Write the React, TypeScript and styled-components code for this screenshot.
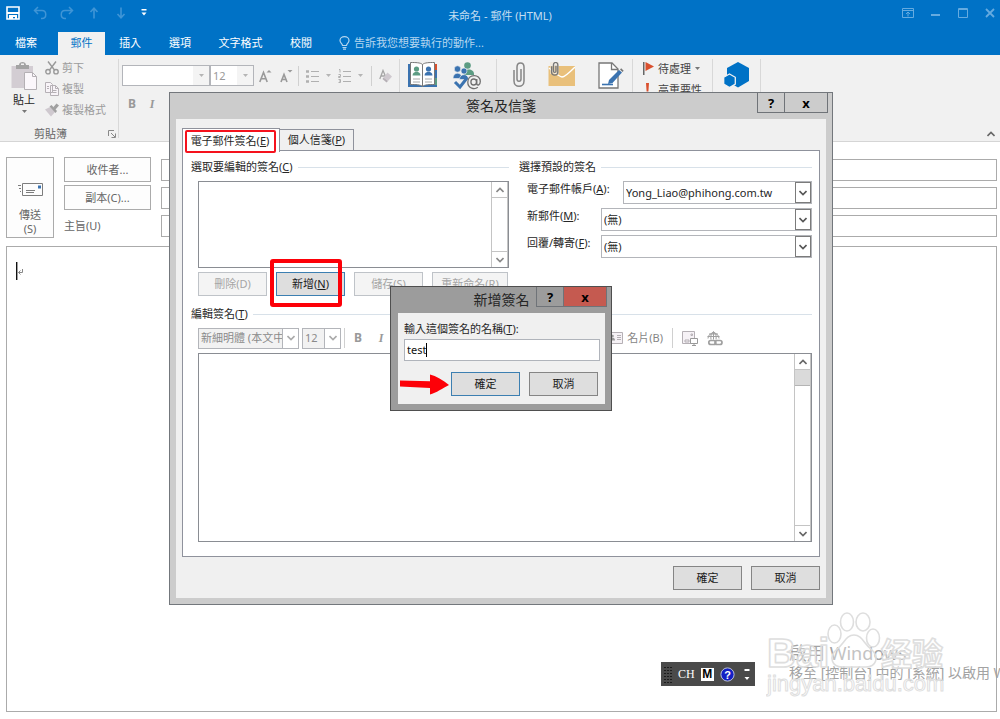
import React from "react";
import styled, { createGlobalStyle, css } from "styled-components";

const GlobalStyle = createGlobalStyle`
  * { box-sizing: border-box; }
  body {
    margin: 0;
    background: #fff;
    font: 11px/16px "Noto Sans", "Noto Sans CJK TC", sans-serif;
    color: #262626;
  }
  button, input, select { font: inherit; color: inherit; }
  button { padding: 0; margin: 0; border: 0; background: none; white-space: nowrap; }
  svg { display: block; flex: none; }
`;

const Page = styled.main`
  position: relative;
  min-height: 100vh;
  display: flex;
  flex-direction: column;
  overflow: hidden;
`;

/* ---------- title bar and ribbon tabs ---------- */

const Header = styled.header`
  background: #0072c6;
  color: #fff;
`;

const TitleBar = styled.div`
  height: 32px;
  display: grid;
  grid-template-columns: 1fr auto 1fr;
  color: #c5def1;
`;

const QuickAccess = styled.div`
  display: flex;
  align-items: center;
  gap: 13px;
  height: 26px;
  padding-left: 6px;
`;

const WindowTitle = styled.h1`
  margin: 0;
  padding-top: 8px;
  font-size: 11px;
  font-weight: 400;
`;

const WindowControls = styled(QuickAccess)`
  justify-content: flex-end;
  padding: 0 5px 0 0;
`;

const RibbonTabs = styled.nav`
  height: 23px;
  display: flex;
`;

const RibbonTab = styled.button<{ $active?: boolean; $width: number }>`
  width: ${(p) => p.$width}px;
  height: 23px;
  padding-bottom: 2px;
  color: ${(p) => (p.$active ? "#0072c6" : "#fff")};
  background: ${(p) => (p.$active ? "#f1f1f1" : "transparent")};
  &:first-child { margin-right: 6px; }
`;

const TellMe = styled.button`
  display: flex;
  align-items: center;
  gap: 4px;
  margin-left: 13px;
  height: 22px;
  color: #b5d6ef;
`;

/* ---------- ribbon ---------- */

const Ribbon = styled.section`
  height: 87px;
  padding: 4px 0 3px;
  display: flex;
  background: #f1f1f1;
  border-bottom: 1px solid #d5d5d5;
`;

const RibbonGroup = styled.div<{ $width: number; $gap?: number }>`
  width: ${(p) => p.$width}px;
  height: 79px;
  display: flex;
  align-items: flex-start;
  justify-content: center;
  gap: ${(p) => p.$gap ?? 0}px;
  padding-top: 3px;
  border-right: 1px solid #d8d8d8;
`;

const NamesGroup = styled(RibbonGroup)`
  justify-content: flex-start;
  padding-left: 8px;
`;

const ClipboardGroup = styled(RibbonGroup)`
  display: grid;
  grid-template-columns: 28px 1fr;
  grid-template-rows: 62px 16px;
  justify-content: start;
  gap: 0 7px;
  padding: 1px 2px 0 10px;
`;

const PasteButton = styled.button`
  align-self: start;
  display: flex;
  flex-direction: column;
  align-items: center;
  gap: 2px;
`;

const ClipboardActions = styled.div`
  display: flex;
  flex-direction: column;
  gap: 5px;
  color: #9c9c9c;
`;

const ClipboardAction = styled.button`
  display: flex;
  align-items: center;
  gap: 3px;
  height: 16px;
`;

const GroupFooter = styled.div`
  grid-column: 1 / -1;
  display: flex;
  justify-content: space-between;
  align-items: center;
  padding-left: 24px;
  margin-top: 4px;
  color: #666;
`;

const FontGroup = styled(RibbonGroup)`
  flex-direction: column;
  align-items: stretch;
  justify-content: flex-start;
  gap: 10px;
  padding: 6px 0 0 3px;
  color: #999;
`;

const ToolRow = styled.div`
  display: flex;
  align-items: center;
`;

const ToolIcon = styled.button<{ $ml?: number }>`
  flex: none;
  margin-left: ${(p) => p.$ml ?? 0}px;
`;

const Rule = styled.span<{ $ml: number }>`
  width: 1px;
  height: 20px;
  margin-left: ${(p) => p.$ml}px;
  background: #d0d0d0;
`;

const Letter = styled.button<{ $italic?: boolean }>`
  width: 20px;
  font: ${(p) => (p.$italic ? "italic" : "normal")} bold 12px/16px
    ${(p) => (p.$italic ? '"Liberation Serif", serif' : '"Noto Sans", sans-serif')};
  color: #999;
`;

const TagList = styled.div`
  display: flex;
  flex-direction: column;
  gap: 4px;
  margin-top: -2px;
`;

const TagButton = styled.button`
  display: flex;
  align-items: center;
  gap: 4px;
  height: 17px;
  color: #444;
`;

const RibbonEnd = styled.div`
  flex: 1;
  display: flex;
  align-items: flex-end;
  justify-content: flex-end;
  padding: 0 5px 1px 0;
`;

/* ---------- message form ---------- */

const Compose = styled.form`
  flex: 1;
  display: flex;
  flex-direction: column;
  gap: 8px;
  padding: 15px 3px 7px 6px;
  color: #666;
`;

const Envelope = styled.div`
  display: grid;
  grid-template-columns: 48px 87px 1fr;
  grid-template-rows: 25px 25px 25px;
  gap: 3px 10px;
  align-items: center;
`;

const SendButton = styled.button`
  grid-row: 1 / 4;
  height: 100%;
  display: flex;
  flex-direction: column;
  align-items: center;
  justify-content: flex-start;
  padding-top: 25px;
  line-height: 14px;
  border: 1px solid #ababab;
  background: #fdfdfd;
  & > svg { margin-bottom: 11px; }
`;

const RecipientButton = styled.button`
  height: 25px;
  border: 1px solid #ababab;
  background: #fdfdfd;
`;

const HeaderInput = styled.input`
  width: 100%;
  height: 22px;
  border: 1px solid #ababab;
  background: #fff;
`;

const Body = styled.div`
  flex: 1;
  padding: 15px 9px;
  border: 1px solid #ababab;
  outline: 0;
`;

/* ---------- dialogs ---------- */

const DialogLayer = styled.div<{ $top: number }>`
  position: absolute;
  inset: ${(p) => p.$top}px 0 auto;
  display: flex;
  justify-content: center;
`;

const MainLayer = styled(DialogLayer)`
  padding-left: 2px;
`;

const Dialog = styled.section<{ $tone: "light" | "dark" }>`
  position: relative;
  ${(p) =>
    p.$tone === "light"
      ? css`
          width: min(664px, 96vw);
          padding: 0 6px 6px;
          border: 1px solid #73777c;
          background: #ccc;
        `
      : css`
          width: 222px;
          padding: 0 6px 6px 7px;
          border: 1px solid #4f4f4f;
          background: #9c9c9c;
        `}
`;

const DialogBar = styled.div`
  height: 26px;
  display: grid;
  grid-template-columns: 1fr auto 1fr;
`;

const DialogTitle = styled.h2`
  grid-column: 2;
  margin: 0;
  font-size: 14px;
  line-height: 25px;
  font-weight: 400;
`;

const DialogControls = styled.div`
  display: flex;
  justify-content: flex-end;
  margin-right: -2px;
`;

const DialogControl = styled.button<{ $wide?: boolean; $danger?: boolean }>`
  flex: none;
  width: ${(p) => (p.$wide ? 44 : 28)}px;
  height: 20px;
  margin-left: -1px;
  border: 1px solid #6f7378;
  border-top: 0;
  background: ${(p) => (p.$danger ? "#c55a50" : "transparent")};
  font: bold 13px/16px "Noto Sans", sans-serif;
  color: #000;
`;

const DialogBody = styled.div`
  padding: 9px 6px 8px;
  background: #f0f0f0;
`;

const TabList = styled.div`
  display: flex;
  align-items: flex-end;
  height: 23px;
  margin-bottom: -1px;
`;

const Tab = styled.button<{ $active?: boolean }>`
  position: relative;
  width: ${(p) => (p.$active ? 98 : 74)}px;
  height: ${(p) => (p.$active ? 24 : 22)}px;
  padding-right: ${(p) => (p.$active ? 2 : 0)}px;
  border: 1px solid #8f929c;
  border-left-width: ${(p) => (p.$active ? 1 : 0)}px;
  border-bottom: ${(p) => (p.$active ? "0" : "1px solid #8f929c")};
  background: ${(p) => (p.$active ? "#fff" : "#f0f0f0")};
  margin-bottom: ${(p) => (p.$active ? -1 : 0)}px;
`;

const Mark = styled.span<{ $thick?: boolean }>`
  position: absolute;
  pointer-events: none;
  ${(p) =>
    p.$thick
      ? css`
          inset: -14px 2px -12px -7px;
          border: 4px solid #fd0008;
          border-radius: 3px;
        `
      : css`
          inset: 1px 3px -1px 2px;
          border: 2px solid #f5121d;
          border-radius: 2px;
        `}
`;

const TabPage = styled.div`
  padding: 8px 7px 14px 8px;
  border: 1px solid #8f929c;
  background: #fff;
`;

const Columns = styled.div`
  display: grid;
  grid-template-columns: 318px 1fr;
  gap: 10px;
  margin-bottom: 10px;
`;

const Group = styled.fieldset`
  min-width: 0;
  margin: 0;
  padding: 0;
  border: 0;
`;

const GroupTitle = styled.div`
  display: flex;
  align-items: center;
  gap: 5px;
  height: 16px;
  margin-bottom: 6px;
  &::after {
    content: "";
    flex: 1;
    height: 1px;
    background: #d8e1e9;
  }
`;

const Indented = styled.div`
  padding-left: 7px;
`;

const Framed = styled.div<{ $height: number }>`
  display: flex;
  justify-content: flex-end;
  height: ${(p) => p.$height}px;
  border: 1px solid #8a8d93;
  background: #fff;
`;

const ScrollBar = styled.div`
  width: 17px;
  display: flex;
  flex-direction: column;
  border: solid #c4c4c4;
  border-width: 0 1px;
`;

const ScrollButton = styled.button<{ $end?: boolean }>`
  height: 16px;
  display: grid;
  place-items: center;
  border: 0 solid #c4c4c4;
  border-width: ${(p) => (p.$end ? "1px 0 0" : "0 0 1px")};
  margin-top: ${(p) => (p.$end ? "auto" : "0")};
`;

const ScrollThumb = styled.div`
  height: 16px;
  border: solid #b4b4b4;
  border-width: 0 0 1px;
  background: #dadada;
`;

const ButtonRow = styled.div<{ $end?: boolean; $top: number }>`
  display: flex;
  gap: 9px;
  justify-content: ${(p) => (p.$end ? "flex-end" : "flex-start")};
  margin-top: ${(p) => p.$top}px;
`;

const PushButton = styled.button<{ $wide?: boolean; $focus?: boolean }>`
  position: relative;
  width: ${(p) => (p.$wide ? 76 : 69)}px;
  height: 24px;
  border: 1px solid ${(p) => (p.$focus ? "#3c7fb1" : "#858585")};
  background: #dedede;
  color: #1a1a1a;
  &:disabled {
    border-color: #bfc3c8;
    background: #f4f4f4;
    color: #a5a5a5;
  }
`;

const FieldList = styled.div`
  display: flex;
  flex-direction: column;
  gap: 4px;
  padding-left: 8px;
`;

const FieldRow = styled.div`
  display: flex;
  justify-content: space-between;
  align-items: flex-start;
`;

const SelectBox = styled.span<{ $width: number; $tall?: boolean; $muted?: boolean }>`
  display: grid;
  grid-template-columns: 1fr 16px;
  width: ${(p) => p.$width}px;
  height: ${(p) => (p.$tall ? 23 : 21)}px;
  border: 1px solid #b3b5ba;
  background: ${(p) => (p.$muted ? "#f2f2f2" : "#fff")};
  color: ${(p) => (p.$muted ? "#8a8a8a" : "#262626")};
`;

const NativeSelect = styled.select<{ $pale?: boolean }>`
  grid-area: 1 / 1 / 2 / 3;
  min-width: 0;
  padding: 0 16px 0 2px;
  border: 0;
  appearance: none;
  background: transparent;
  color: ${(p) => (p.$pale ? "#999" : "inherit")};
`;

const SelectArrow = styled.span<{ $look: "strong" | "soft" | "flat" }>`
  grid-area: 1 / 2;
  display: grid;
  place-items: center;
  pointer-events: none;
  background: ${(p) => (p.$look === "flat" ? "#f4f4f4" : "#fff")};
  border: ${(p) => (p.$look === "strong" ? "1px solid #7b7b7b" : "0 solid #b3b5ba")};
  ${(p) => p.$look === "soft" && "border-left-width: 1px;"}
`;

const EditorTools = styled(ToolRow)`
  height: 20px;
  gap: 3px;
  margin-bottom: 5px;
  color: #858585;
`;

const EditorToolsEnd = styled.div`
  display: flex;
  align-items: center;
  gap: 9px;
  margin-left: auto;
  padding-right: 89px;
`;

const CardButton = styled.button`
  display: flex;
  align-items: center;
  gap: 4px;
`;

/* ---------- name prompt ---------- */

const PromptBody = styled.div`
  padding: 8px 5px 8px 6px;
  background: #f0f0f0;
`;

const PromptLabel = styled.label`
  display: block;
`;

const PromptField = styled.label`
  display: flex;
  align-items: center;
  height: 22px;
  margin-top: 2px;
  padding-left: 2px;
  border: 1px solid #b0b4bb;
  background: #fff;
`;

const PromptInput = styled.input`
  field-sizing: content;
  padding: 0;
  border: 0;
  outline: 0;
  background: transparent;
  color: #111;
`;

const Caret = styled.span`
  width: 1px;
  height: 14px;
  background: #000;
`;

const PromptButtons = styled.div`
  display: flex;
  align-items: center;
  gap: 9px;
  margin-top: 11px;
  & > svg { margin: 0 -7px 0 -4px; }
`;

/* ---------- desktop overlays ---------- */

const LanguageBar = styled.aside`
  position: absolute;
  right: 245px;
  top: 662px;
  width: 94px;
  height: 24px;
  display: flex;
  align-items: center;
  padding: 0 3px;
  gap: 6px;
  background: #4a4a4a;
  color: #fff;
  font: 12px/16px "Liberation Serif", serif;
`;

const InputMode = styled.button`
  flex: none;
  width: 13px;
  height: 13px;
  background: #fff;
  color: #000;
  font: bold 12px/13px "Liberation Sans", sans-serif;
`;

const Activation = styled.aside`
  position: absolute;
  left: calc(100% - 211px);
  top: 642px;
  width: 240px;
  font-size: 14px;
  line-height: 18px;
  white-space: nowrap;
  color: #a3a3a3;
`;

const ActivationTitle = styled.div`
  font-size: 18px;
  line-height: 22px;
`;

const Watermark = styled.aside`
  position: absolute;
  right: 54px;
  top: 610px;
  width: 180px;
  pointer-events: none;
`;

/* ---------- drawings ---------- */

const Chevron = ({ up, color = "#666" }: { up?: boolean; color?: string }) => (
  <svg width="8" height="6" viewBox="0 0 8 6" fill="none" stroke={color} strokeWidth="1.6">
    <path d={up ? "M.5 5 4 1.500 7.500 5" : "M.5 1 4 4.500 7.500 1"} />
  </svg>
);

const Triangle = ({ color = "#777" }: { color?: string }) => (
  <svg width="5" height="3" viewBox="0 0 5 3" fill={color}>
    <path d="M0 0h5L2.500 3z" />
  </svg>
);

const SaveIcon = () => (
  <svg width="14" height="14" viewBox="0 0 14 14">
    <path d="M1 1h12v12H1z" fill="none" stroke="#fff" strokeWidth="1.600" />
    <path d="M1 6h12v2H1zM3 9h8v4H9v-2H7v2H3z" fill="#fff" />
  </svg>
);

const TurnIcon = ({ redo }: { redo?: boolean }) => (
  <svg width="14" height="14" viewBox="0 0 14 14" fill="none" stroke="#3f95d6" strokeWidth="1.5">
    <g transform={redo ? "translate(14 0) scale(-1 1)" : undefined}>
      <path d="M5 1 1.500 4.500 5 8M1.500 4.500H9c5 0 5 8 0 8H8" />
    </g>
  </svg>
);

const ArrowIcon = ({ down }: { down?: boolean }) => (
  <svg width="14" height="14" viewBox="0 0 14 14" fill="none" stroke="#3f95d6" strokeWidth="1.6">
    <path d={down ? "M7 1.500v10M3.500 8 7 11.800 10.500 8" : "M7 12.500v-10M3.500 6 7 2.200 10.500 6"} />
  </svg>
);

const MoreIcon = () => (
  <svg width="6" height="8" viewBox="0 0 6 8" fill="#fff">
    <path d="M.5 0h5v1.500h-5zM.5 3.500h5L3 6.500z" />
  </svg>
);

const BulbIcon = () => (
  <svg width="11" height="14" viewBox="0 0 11 14" fill="none" stroke="#b5d6ef" strokeWidth="1.2">
    <path d="M3.500 9.500C3.500 7.500 1 7 1 4.500a4.500 3.900 0 0 1 9 0C10 7 7.500 7.500 7.500 9.500zM3.500 11.500h4M4 13.200h3" />
  </svg>
);

const PasteIcon = () => (
  <svg width="28" height="30" viewBox="0 0 28 30">
    <path d="M1.500 6h21.500v22H1.500z" fill="#d3cdd3" />
    <path d="M6 9V5h3c0-4 7-4 7 0h3v4zM11 5h3V3.500h-3z" fill="#a3a3a3" />
    <path d="M14.500 12.500h8l4 4v13h-12z" fill="#fbf7fb" stroke="#b4b0b4" />
    <path d="M22.500 12.500v4h4" fill="none" stroke="#b4b0b4" />
  </svg>
);

const ScissorsIcon = () => (
  <svg width="14" height="14" viewBox="0 0 14 14" fill="none" stroke="#999" strokeWidth="1.4">
    <path d="M3 .5 9.500 9M11 .5 4.500 9" />
    <circle cx="3" cy="10.700" r="2.200" />
    <circle cx="11" cy="10.700" r="2.200" />
  </svg>
);

const CopyIcon = () => (
  <svg width="14" height="14" viewBox="0 0 14 14" fill="#f8f4f8" stroke="#b5b0b5">
    <path d="M.5.5h5l2 2v8h-7zM5.500 3.500h5l3 3v7h-8z" />
    <path d="M10.500 3.500v3h3M7.500 8.500h4M7.500 10.500h4M2 4.500h2M2 6.500h2" fill="none" />
  </svg>
);

const PainterIcon = () => (
  <svg width="14" height="14" viewBox="0 0 14 14">
    <path d="M0 6.500 5 4l5 5-4 4.500z" fill="#cfc9cf" />
    <path d="m4.500 3.500 2-1.500 5.500 6-1.500 2zM8.500 4l3-3.500L14 2.500l-3.500 4z" fill="#a0a0a0" />
  </svg>
);

const LauncherIcon = () => (
  <svg width="8" height="8" viewBox="0 0 8 8" fill="none" stroke="#888">
    <path d="M.5 6V.5H6M3 3l4 4M7.500 3.500v4h-4" />
  </svg>
);

const SizeIcon = ({ smaller }: { smaller?: boolean }) => (
  <svg width="13" height="14" viewBox="0 0 13 14" fill="none" stroke="#999" strokeWidth="1.600">
    <path d={smaller ? "M1 13 4 5.500 7 13M2 10.500h4" : "M.8 13 4.500 3.500 8.200 13M2 9.800h5"} />
    <path d={smaller ? "M7.500 1h5L10 3.500z" : "M7.500 3.500h5L10 1z"} fill="#999" stroke="none" />
  </svg>
);

const ListIcon = ({ numbered }: { numbered?: boolean }) => (
  <svg width="14" height="14" viewBox="0 0 14 14" fill="none" stroke="#b0b0b0">
    <path d="M5 2.500h8M5 7.500h8M5 12.500h8" />
    <path
      d={numbered ? "M1 0.500h1v3M0.500 5.500h2v2h-2v1h2M0.500 10.500h2v3h-2M1 12h1" : "M0 2.500h3M0 7.500h3M0 12.500h3"}
      strokeWidth={numbered ? 1 : 2.500}
    />
  </svg>
);

const EraserIcon = () => (
  <svg width="14" height="14" viewBox="0 0 14 14">
    <path d="M.8 10 4 1.500l3 7M2 7h4" fill="none" stroke="#a5a5a5" strokeWidth="1.300" />
    <path d="m8.500 3.500 4.500 4-4 4.500-4.500-3.500z" fill="#cfc9cf" />
    <path d="m4.500 8.500 4.500 3.500-1.500 1.500L3.500 10z" fill="#b5afb5" />
  </svg>
);

const AddressBookIcon = () => (
  <svg width="30" height="26" viewBox="0 0 30 26">
    <path d="M0 2h29v23H0z" fill="#3b73b0" />
    <path d="M27 2h2v6h-2z" fill="#d9502e" />
    <path d="M27 16h2v7h-2z" fill="#5c9c83" />
    <path d="M2.500.5c5 0 10 0 12 2 2-2 7-2 12-2v22c-5 0-10 0-12 2-2-2-7-2-12-2z" fill="#fff" stroke="#777" />
    <path d="M14.500 2.500v22" stroke="#777" />
    <circle cx="8.500" cy="7" r="2.600" fill="#5c9c83" />
    <path d="M4.500 13.500c0-5 8-5 8 0z" fill="#5c9c83" />
    <circle cx="20.500" cy="7" r="2.600" fill="#3b73b0" />
    <path d="M16.500 13.500c0-5 8-5 8 0z" fill="#3b73b0" />
    <path d="M5 17h7M5 20h7M17 17h7M17 20h7" stroke="#aaa" />
  </svg>
);

const CheckNamesIcon = () => (
  <svg width="30" height="28" viewBox="0 0 30 28">
    <circle cx="14.500" cy="3.500" r="3.300" fill="#5c9c83" />
    <path d="M11 12c0-6 10-6 10 0v1H11z" fill="#5c9c83" />
    <g fill="#3b73b0" stroke="#f1f1f1" strokeWidth=".6">
      <circle cx="4.500" cy="7" r="3.200" />
      <path d="M0 16.500c0-7 9-7 9 0z" />
      <circle cx="11" cy="9" r="3" />
      <path d="M6.500 17.500c0-6.500 9-6.500 9 0z" />
    </g>
    <path d="m2 20 5 5 7-9" fill="none" stroke="#3b73b0" strokeWidth="3" />
    <circle cx="21" cy="20" r="6.500" fill="#f1f1f1" />
    <path
      d="M23.800 17v5c.5 2 3.500 1 3.500-2.500 0-8-12.500-8-12.500.8 0 6.500 7 7.500 10 5M23.500 20a2.800 3 0 1 1-5.600 0 2.800 3 0 0 1 5.600 0"
      fill="none"
      stroke="#707070"
      strokeWidth="1.300"
    />
  </svg>
);

const clipPath = "M8 7v10c0 3-4 3-4 0V5c0-5.500 7-5.500 7 0v14c0 7-10 7-10 0V8";

const ClipIcon = () => (
  <svg width="12" height="27" viewBox="0 0 12 27" fill="none" stroke="#858585" strokeWidth="1.500">
    <path d={clipPath} />
  </svg>
);

const AttachItemIcon = () => (
  <svg width="27" height="26" viewBox="0 0 27 26">
    <path d="M.5 4H27v20H.5z" fill="#e9c07b" />
    <path d="M1 6c7 6 11 9 13 9S21 11 27 5" fill="none" stroke="#fff" strokeWidth="1.300" />
    <path d="M2 0h9v12H2z" fill="#f1e8d8" opacity=".6" />
    <g transform="translate(3 0) scale(.62 .54)" fill="none" stroke="#777" strokeWidth="2.200">
      <path d={clipPath} />
    </g>
  </svg>
);

const SignatureIcon = () => (
  <svg width="26" height="28" viewBox="0 0 26 28">
    <path d="M1 1h13l6 6v19H1z" fill="#fff" stroke="#777" strokeWidth="1.300" />
    <path d="M13.500 1v6.500H20" fill="none" stroke="#777" strokeWidth="1.300" />
    <path d="m11 18 10-10 3 2.500L14.500 21l-4.500 1z" fill="#3b73b0" />
    <path d="m22 7.500 1.200-1.200 2.500 2.500-1.200 1.300z" fill="#777" />
    <path d="M4 22.500h11" stroke="#3b73b0" strokeWidth="1.600" />
  </svg>
);

const FlagIcon = () => (
  <svg width="11" height="13" viewBox="0 0 11 13">
    <path d="M0 0h1.500v13H0z" fill="#666" />
    <path d="M2.500 0 11 4.500 2.500 9z" fill="#d9502e" />
  </svg>
);

const ImportanceIcon = () => (
  <svg width="11" height="13" viewBox="0 0 11 13" fill="#d9502e">
    <path d="M3 0h3l-.6 8.500H3.600zM3.200 10h2.600v2.500H3.200z" />
  </svg>
);

const HexIcon = () => (
  <svg width="26" height="26" viewBox="0 0 26 26" fill="#0072c6">
    <path d="m14 0 11 6v13l-11 6.500L3 19V6z" />
    <path d="m5.500 12 5.800 3.300v6.800L5.500 25.500-.3 22.100v-6.800z" stroke="#f1f1f1" strokeWidth="1.300" />
  </svg>
);

const RibbonDisplayIcon = () => (
  <svg width="12" height="10" viewBox="0 0 12 10" fill="none" stroke="#65abe0">
    <path d="M.5.5h11v9H.5zM.5 2.500h11M6 8.500v-4M4 6l2-2 2 2" />
  </svg>
);

const MinimizeIcon = () => (
  <svg width="9" height="10" viewBox="0 0 9 10" fill="#65abe0">
    <path d="M0 6h9v2H0z" />
  </svg>
);

const MaximizeIcon = () => (
  <svg width="10" height="10" viewBox="0 0 10 10" fill="none" stroke="#65abe0">
    <path d="M.5.5h9v9h-9zM0 1.500h10" />
  </svg>
);

const CloseIcon = () => (
  <svg width="10" height="10" viewBox="0 0 10 10" fill="none" stroke="#65abe0" strokeWidth="1.800">
    <path d="m1 1 8 8M9 1 1 9" />
  </svg>
);

const SendIcon = () => (
  <svg width="26" height="14" viewBox="0 0 26 14" fill="none" stroke="#7d7d7d">
    <path d="M5.500.5h20v12h-20zM9 7.500h9M9 9.500h8M1 2.500h3M2 5.500h2M3 8.500h1" />
    <path d="M21 2.500h3v3h-3z" fill="#3b73b0" stroke="none" />
  </svg>
);

const InsertionMark = () => (
  <svg width="8" height="18" viewBox="0 0 8 18" fill="none">
    <path d="M.7 0v18" stroke="#111" strokeWidth="1.400" />
    <path d="M6.500 7v3.500h-4M4.500 8.500l-2 2 2 2" stroke="#888" />
  </svg>
);

const CardIcon = () => (
  <svg width="15" height="12" viewBox="0 0 15 12" fill="none" stroke="#b5b0b5">
    <path d="M.5.5h14v11H.5z" fill="#f6f2f6" />
    <circle cx="4.500" cy="4" r="1.300" fill="#999" stroke="none" />
    <path d="M2 8.500c0-4 5-4 5 0z" fill="#999" stroke="none" />
    <path d="M9 3.500h4M9 5.500h4M9 7.500h4" />
  </svg>
);

const PictureIcon = () => (
  <svg width="16" height="15" viewBox="0 0 16 15" fill="none" stroke="#b5b0b5">
    <path d="M.5.500h12v12H.500z" fill="#f6f2f6" />
    <path d="M3 9h4v2H3zM9 3h1.500v1.500H9z" />
    <path d="M8.500 7.500h7v5h-7z" fill="#fff" stroke="#999" />
    <path d="M10 14.500h4M12 12.500v2" stroke="#999" />
  </svg>
);

const LinkIcon = () => (
  <svg width="16" height="15" viewBox="0 0 16 15" fill="none" stroke="#a0a0a0">
    <path d="M1 7.500a5.500 5.500 0 0 1 11 0M.500 5.500h12M2 3h9M6.500.500v8M4 8.500C3.500 5 4 2 6.500.800 9 2 9.500 5 9 8.500" />
    <rect x="1.800" y="9.500" width="7" height="4" rx="2" strokeWidth="1.700" fill="#fff" />
    <rect x="8" y="9.500" width="7" height="4" rx="2" strokeWidth="1.700" />
  </svg>
);

const RedArrow = () => (
  <svg width="49" height="22" viewBox="0 0 49 22" fill="#fd0008">
    <path d="M0 7.500 30 8.200V1.500C36 3 43 7 49 12c-6 3-13 8-19 9.500V15L0 13.500z" />
  </svg>
);

const GripIcon = () => (
  <svg width="8" height="17" viewBox="0 0 8 17" stroke="#1c1c1c" strokeWidth="2" strokeDasharray="1 2">
    <path d="M1 1v16M4 1v16M7 1v16" />
  </svg>
);

const HelpIcon = () => (
  <svg width="15" height="15" viewBox="0 0 15 15">
    <circle cx="7.500" cy="7.500" r="6.600" fill="#1420c4" stroke="#b9c0d8" />
    <text x="7.500" y="11.500" textAnchor="middle" fill="#fff" fontSize="11" fontWeight="700" fontFamily="Liberation Sans, sans-serif">
      ?
    </text>
  </svg>
);

const BaiduMark = () => (
  <svg width="180" height="92" viewBox="0 0 180 92" fill="#fff" fillOpacity=".35" stroke="#dedede" strokeWidth="1.600" strokeLinejoin="round">
    <ellipse cx="81" cy="12" rx="6.500" ry="9" />
    <ellipse cx="97" cy="12" rx="7" ry="9" />
    <ellipse cx="68.500" cy="24" rx="6.500" ry="9" />
    <ellipse cx="107" cy="28" rx="6.500" ry="9" />
    <path d="M88 25c8 0 10 9 17 14 9 8 5 18-5 18H76c-10 0-14-10-5-18 7-5 9-14 17-14z" />
    <g fontFamily="Liberation Sans, Noto Sans CJK SC, sans-serif" fontWeight="700">
      <text x="1" y="57" fontSize="40">Bai</text>
      <text x="115" y="55" fontSize="31">经验</text>
      <text x="1" y="81" fontSize="22" strokeWidth="1" fontWeight="400">jingyan.baidu.com</text>
    </g>
  </svg>
);

/* ---------- composite parts ---------- */

type ComboProps = {
  id?: string;
  label?: string;
  value: string;
  width: number;
  look: "strong" | "soft" | "flat";
};

const Combo = ({ id, label, value, width, look }: ComboProps) => (
  <SelectBox $width={width} $tall={look === "strong"} $muted={look === "soft"}>
    <NativeSelect id={id} aria-label={label} $pale={look === "flat"}>
      <option>{value}</option>
    </NativeSelect>
    <SelectArrow $look={look}>
      {look === "flat" ? <Triangle color="#b5b5b5" /> : <Chevron color={look === "soft" ? "#aaa" : "#555"} />}
    </SelectArrow>
  </SelectBox>
);

const accounts = [
  { id: "account", text: "電子郵件帳戶", hotkey: "A", value: "Yong_Liao@phihong.com.tw", width: 189 },
  { id: "new-mail", text: "新郵件", hotkey: "M", value: "(無)", width: 211 },
  { id: "reply", text: "回覆/轉寄", hotkey: "F", value: "(無)", width: 211 },
];

const tabs = [
  { text: "檔案", width: 52 },
  { text: "郵件", width: 47, active: true },
  { text: "插入", width: 50 },
  { text: "選項", width: 50 },
  { text: "文字格式", width: 71 },
  { text: "校閱", width: 50 },
];

const NamePrompt = () => (
  <Dialog $tone="dark" role="dialog" aria-label="新增簽名">
    <DialogBar>
      <DialogTitle>新增簽名</DialogTitle>
      <DialogControls>
        <DialogControl aria-label="說明">?</DialogControl>
        <DialogControl $wide $danger aria-label="關閉">x</DialogControl>
      </DialogControls>
    </DialogBar>
    <PromptBody>
      <PromptLabel htmlFor="signature-name">
        輸入這個簽名的名稱(<u>T</u>):
      </PromptLabel>
      <PromptField>
        <PromptInput id="signature-name" defaultValue="test" />
        <Caret />
      </PromptField>
      <PromptButtons>
        <RedArrow />
        <PushButton $focus>確定</PushButton>
        <PushButton>取消</PushButton>
      </PromptButtons>
    </PromptBody>
  </Dialog>
);

const SignatureDialog = () => (
  <Dialog $tone="light" role="dialog" aria-label="簽名及信箋">
    <DialogBar>
      <DialogTitle>簽名及信箋</DialogTitle>
      <DialogControls>
        <DialogControl aria-label="說明">?</DialogControl>
        <DialogControl $wide aria-label="關閉">x</DialogControl>
      </DialogControls>
    </DialogBar>
    <DialogBody>
      <TabList role="tablist">
        <Tab $active role="tab">
          電子郵件簽名(<u>E</u>)
          <Mark />
        </Tab>
        <Tab role="tab">
          個人信箋(<u>P</u>)
        </Tab>
      </TabList>
      <TabPage>
        <Columns>
          <Group>
            <GroupTitle>
              <span>選取要編輯的簽名(<u>C</u>)</span>
            </GroupTitle>
            <Indented>
              <Framed $height={87}>
                <ScrollBar>
                  <ScrollButton aria-label="向上"><Chevron up color="#888" /></ScrollButton>
                  <ScrollButton $end aria-label="向下"><Chevron color="#888" /></ScrollButton>
                </ScrollBar>
              </Framed>
              <ButtonRow $top={4}>
                <PushButton disabled>刪除(D)</PushButton>
                <PushButton $focus>
                  新增(<u>N</u>)
                  <Mark $thick />
                </PushButton>
                <PushButton disabled>儲存(S)</PushButton>
                <PushButton disabled $wide>重新命名(R)</PushButton>
              </ButtonRow>
            </Indented>
          </Group>
          <Group>
            <GroupTitle>
              <span>選擇預設的簽名</span>
            </GroupTitle>
            <FieldList>
              {accounts.map((f) => (
                <FieldRow key={f.id}>
                  <label htmlFor={f.id}>
                    {f.text}(<u>{f.hotkey}</u>):
                  </label>
                  <Combo id={f.id} value={f.value} width={f.width} look="strong" />
                </FieldRow>
              ))}
            </FieldList>
          </Group>
        </Columns>
        <Group>
          <GroupTitle>
            <span>編輯簽名(<u>T</u>)</span>
          </GroupTitle>
          <Indented>
            <EditorTools>
              <Combo label="字型" value="新細明體 (本文中文字型)" width={101} look="soft" />
              <Combo label="字型大小" value="12" width={39} look="soft" />
              <Rule $ml={0} />
              <Letter>B</Letter>
              <Letter $italic>I</Letter>
              <EditorToolsEnd>
                <CardButton>
                  <CardIcon />
                  名片(B)
                </CardButton>
                <Rule $ml={0} />
                <ToolIcon aria-label="圖片"><PictureIcon /></ToolIcon>
                <ToolIcon aria-label="超連結"><LinkIcon /></ToolIcon>
              </EditorToolsEnd>
            </EditorTools>
            <Framed $height={189}>
              <ScrollBar>
                <ScrollButton aria-label="向上"><Chevron up /></ScrollButton>
                <ScrollThumb />
                <ScrollButton $end aria-label="向下"><Chevron /></ScrollButton>
              </ScrollBar>
            </Framed>
          </Indented>
        </Group>
      </TabPage>
      <ButtonRow $top={9} $end>
        <PushButton>確定</PushButton>
        <PushButton>取消</PushButton>
      </ButtonRow>
    </DialogBody>
    <DialogLayer $top={193}>
      <NamePrompt />
    </DialogLayer>
  </Dialog>
);

export default function App() {
  return (
    <Page>
      <GlobalStyle />
      <Header>
        <TitleBar>
          <QuickAccess>
            <ToolIcon aria-label="儲存"><SaveIcon /></ToolIcon>
            <ToolIcon aria-label="復原"><TurnIcon /></ToolIcon>
            <ToolIcon aria-label="重複"><TurnIcon redo /></ToolIcon>
            <ToolIcon aria-label="上一個"><ArrowIcon /></ToolIcon>
            <ToolIcon aria-label="下一個"><ArrowIcon down /></ToolIcon>
            <ToolIcon aria-label="自訂"><MoreIcon /></ToolIcon>
          </QuickAccess>
          <WindowTitle>未命名 - 郵件 (HTML)</WindowTitle>
          <WindowControls>
            <ToolIcon aria-label="功能區顯示選項"><RibbonDisplayIcon /></ToolIcon>
            <ToolIcon $ml={4} aria-label="最小化"><MinimizeIcon /></ToolIcon>
            <ToolIcon $ml={5} aria-label="最大化"><MaximizeIcon /></ToolIcon>
            <ToolIcon $ml={4} aria-label="關閉"><CloseIcon /></ToolIcon>
          </WindowControls>
        </TitleBar>
        <RibbonTabs>
          {tabs.map((t) => (
            <RibbonTab key={t.text} $width={t.width} $active={t.active}>
              {t.text}
            </RibbonTab>
          ))}
          <TellMe>
            <BulbIcon />
            告訴我您想要執行的動作...
          </TellMe>
        </RibbonTabs>
      </Header>

      <Ribbon>
        <ClipboardGroup $width={119}>
          <PasteButton>
            <PasteIcon />
            貼上
            <Triangle />
          </PasteButton>
          <ClipboardActions>
            <ClipboardAction><ScissorsIcon />剪下</ClipboardAction>
            <ClipboardAction><CopyIcon />複製</ClipboardAction>
            <ClipboardAction><PainterIcon />複製格式</ClipboardAction>
          </ClipboardActions>
          <GroupFooter>
            剪貼簿
            <ToolIcon aria-label="剪貼簿選項"><LauncherIcon /></ToolIcon>
          </GroupFooter>
        </ClipboardGroup>

        <FontGroup $width={281}>
          <ToolRow>
            <Combo label="字型" value="" width={88} look="flat" />
            <Combo label="字型大小" value="12" width={44} look="flat" />
            <ToolIcon $ml={5} aria-label="放大字型"><SizeIcon /></ToolIcon>
            <ToolIcon $ml={8} aria-label="縮小字型"><SizeIcon smaller /></ToolIcon>
            <Rule $ml={5} />
            <ToolIcon $ml={7} aria-label="項目符號"><ListIcon /></ToolIcon>
            <ToolIcon $ml={6} aria-label="項目符號選項"><Triangle color="#b5b5b5" /></ToolIcon>
            <ToolIcon $ml={7} aria-label="編號"><ListIcon numbered /></ToolIcon>
            <ToolIcon $ml={6} aria-label="編號選項"><Triangle color="#b5b5b5" /></ToolIcon>
            <Rule $ml={8} />
            <ToolIcon $ml={7} aria-label="清除格式"><EraserIcon /></ToolIcon>
          </ToolRow>
          <ToolRow>
            <Letter>B</Letter>
            <Letter $italic>I</Letter>
          </ToolRow>
        </FontGroup>

        <NamesGroup $width={97} $gap={15}>
          <ToolIcon aria-label="通訊錄"><AddressBookIcon /></ToolIcon>
          <ToolIcon aria-label="檢查名稱"><CheckNamesIcon /></ToolIcon>
        </NamesGroup>

        <RibbonGroup $width={136} $gap={23}>
          <ToolIcon $ml={8} aria-label="附加檔案"><ClipIcon /></ToolIcon>
          <ToolIcon aria-label="附加項目"><AttachItemIcon /></ToolIcon>
          <ToolIcon aria-label="簽名"><SignatureIcon /></ToolIcon>
        </RibbonGroup>

        <RibbonGroup $width={80}>
          <TagList>
            <TagButton><FlagIcon />待處理<Triangle /></TagButton>
            <TagButton><ImportanceIcon />高重要性</TagButton>
          </TagList>
        </RibbonGroup>

        <RibbonGroup $width={48}>
          <ToolIcon aria-label="Office 增益集"><HexIcon /></ToolIcon>
        </RibbonGroup>

        <RibbonEnd>
          <ToolIcon aria-label="摺疊功能區"><Chevron up /></ToolIcon>
        </RibbonEnd>
      </Ribbon>

      <Compose onSubmit={(e) => e.preventDefault()}>
        <Envelope>
          <SendButton type="submit">
            <SendIcon />
            <span>傳送</span>
            <span>(S)</span>
          </SendButton>
          <RecipientButton type="button">收件者...</RecipientButton>
          <HeaderInput aria-label="收件者" />
          <RecipientButton type="button">副本(C)...</RecipientButton>
          <HeaderInput aria-label="副本" />
          <label htmlFor="subject">主旨(U)</label>
          <HeaderInput id="subject" />
        </Envelope>
        <Body role="textbox" aria-label="郵件內容" tabIndex={0}>
          <InsertionMark />
        </Body>
      </Compose>

      <MainLayer $top={92}>
        <SignatureDialog />
      </MainLayer>

      <LanguageBar>
        <GripIcon />
        CH
        <InputMode>M</InputMode>
        <ToolIcon aria-label="說明"><HelpIcon /></ToolIcon>
        <ToolIcon $ml={3} aria-label="選項">
          <svg width="6" height="14" viewBox="0 0 6 14" fill="#fff">
            <path d="M.5 2h5v2h-5zM.5 10h5L3 13z" />
          </svg>
        </ToolIcon>
      </LanguageBar>
      <Activation>
        <ActivationTitle>啟用 Windows</ActivationTitle>
        移至 [控制台] 中的 [系統] 以啟用 Windows。
      </Activation>
      <Watermark>
        <BaiduMark />
      </Watermark>
    </Page>
  );
}
